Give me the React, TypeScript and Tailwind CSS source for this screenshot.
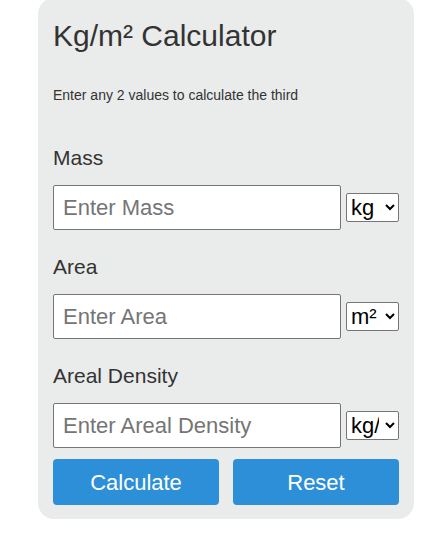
import { useState } from "react";

const fields = [
  { label: "Mass", placeholder: "Enter Mass", units: ["kg", "g", "lb"] },
  { label: "Area", placeholder: "Enter Area", units: ["m²", "cm²", "ft²"] },
  { label: "Areal Density", placeholder: "Enter Areal Density", units: ["kg/m²", "g/cm²"] },
];

export default function App() {
  const [values, setValues] = useState<string[]>(["", "", ""]);

  return (
    <div className="min-h-screen bg-white font-['Liberation_Sans',Arial,sans-serif] text-[#333]">
      <div className="ml-[38px] mt-[-2px] w-[376px] rounded-[16px] bg-[#eaebeb] px-[15px] pt-[21px] pb-[14px]">
        <h1 className="text-[30px] leading-[34px] font-normal">Kg/m² Calculator</h1>
        <p className="mt-[34px] text-[14px] leading-[16px]">Enter any 2 values to calculate the third</p>

        {fields.map((f, i) => (
          <div key={f.label}>
            <label className={`block text-[21px] leading-[24px] ${i === 0 ? "mt-[43px]" : "mt-[25px]"}`}>
              {f.label}
            </label>
            <div className="mt-[15px] flex items-center gap-[5px]">
              <input
                type="number"
                value={values[i]}
                onChange={(e) => {
                  const next = [...values];
                  next[i] = e.target.value;
                  setValues(next);
                }}
                placeholder={f.placeholder}
                className="h-[45px] w-[288px] rounded-[2px] border border-[#767676] bg-white px-[9px] text-[22px] text-black outline-none placeholder:text-[#757575]"
              />
              <select className="h-[29px] w-[53px] rounded-[2px] border border-[#767676] bg-white pr-[3px] text-[22px] text-black">
                {f.units.map((u) => (
                  <option key={u}>{u}</option>
                ))}
              </select>
            </div>
          </div>
        ))}

        <div className="mt-[11px] flex gap-[14px]">
          <button className="h-[46px] flex-1 rounded-[4px] bg-[#2d8fd7] text-[22px] text-white">Calculate</button>
          <button
            className="h-[46px] flex-1 rounded-[4px] bg-[#2d8fd7] text-[22px] text-white"
            onClick={() => setValues(["", "", ""])}
          >
            Reset
          </button>
        </div>
      </div>
    </div>
  );
}
